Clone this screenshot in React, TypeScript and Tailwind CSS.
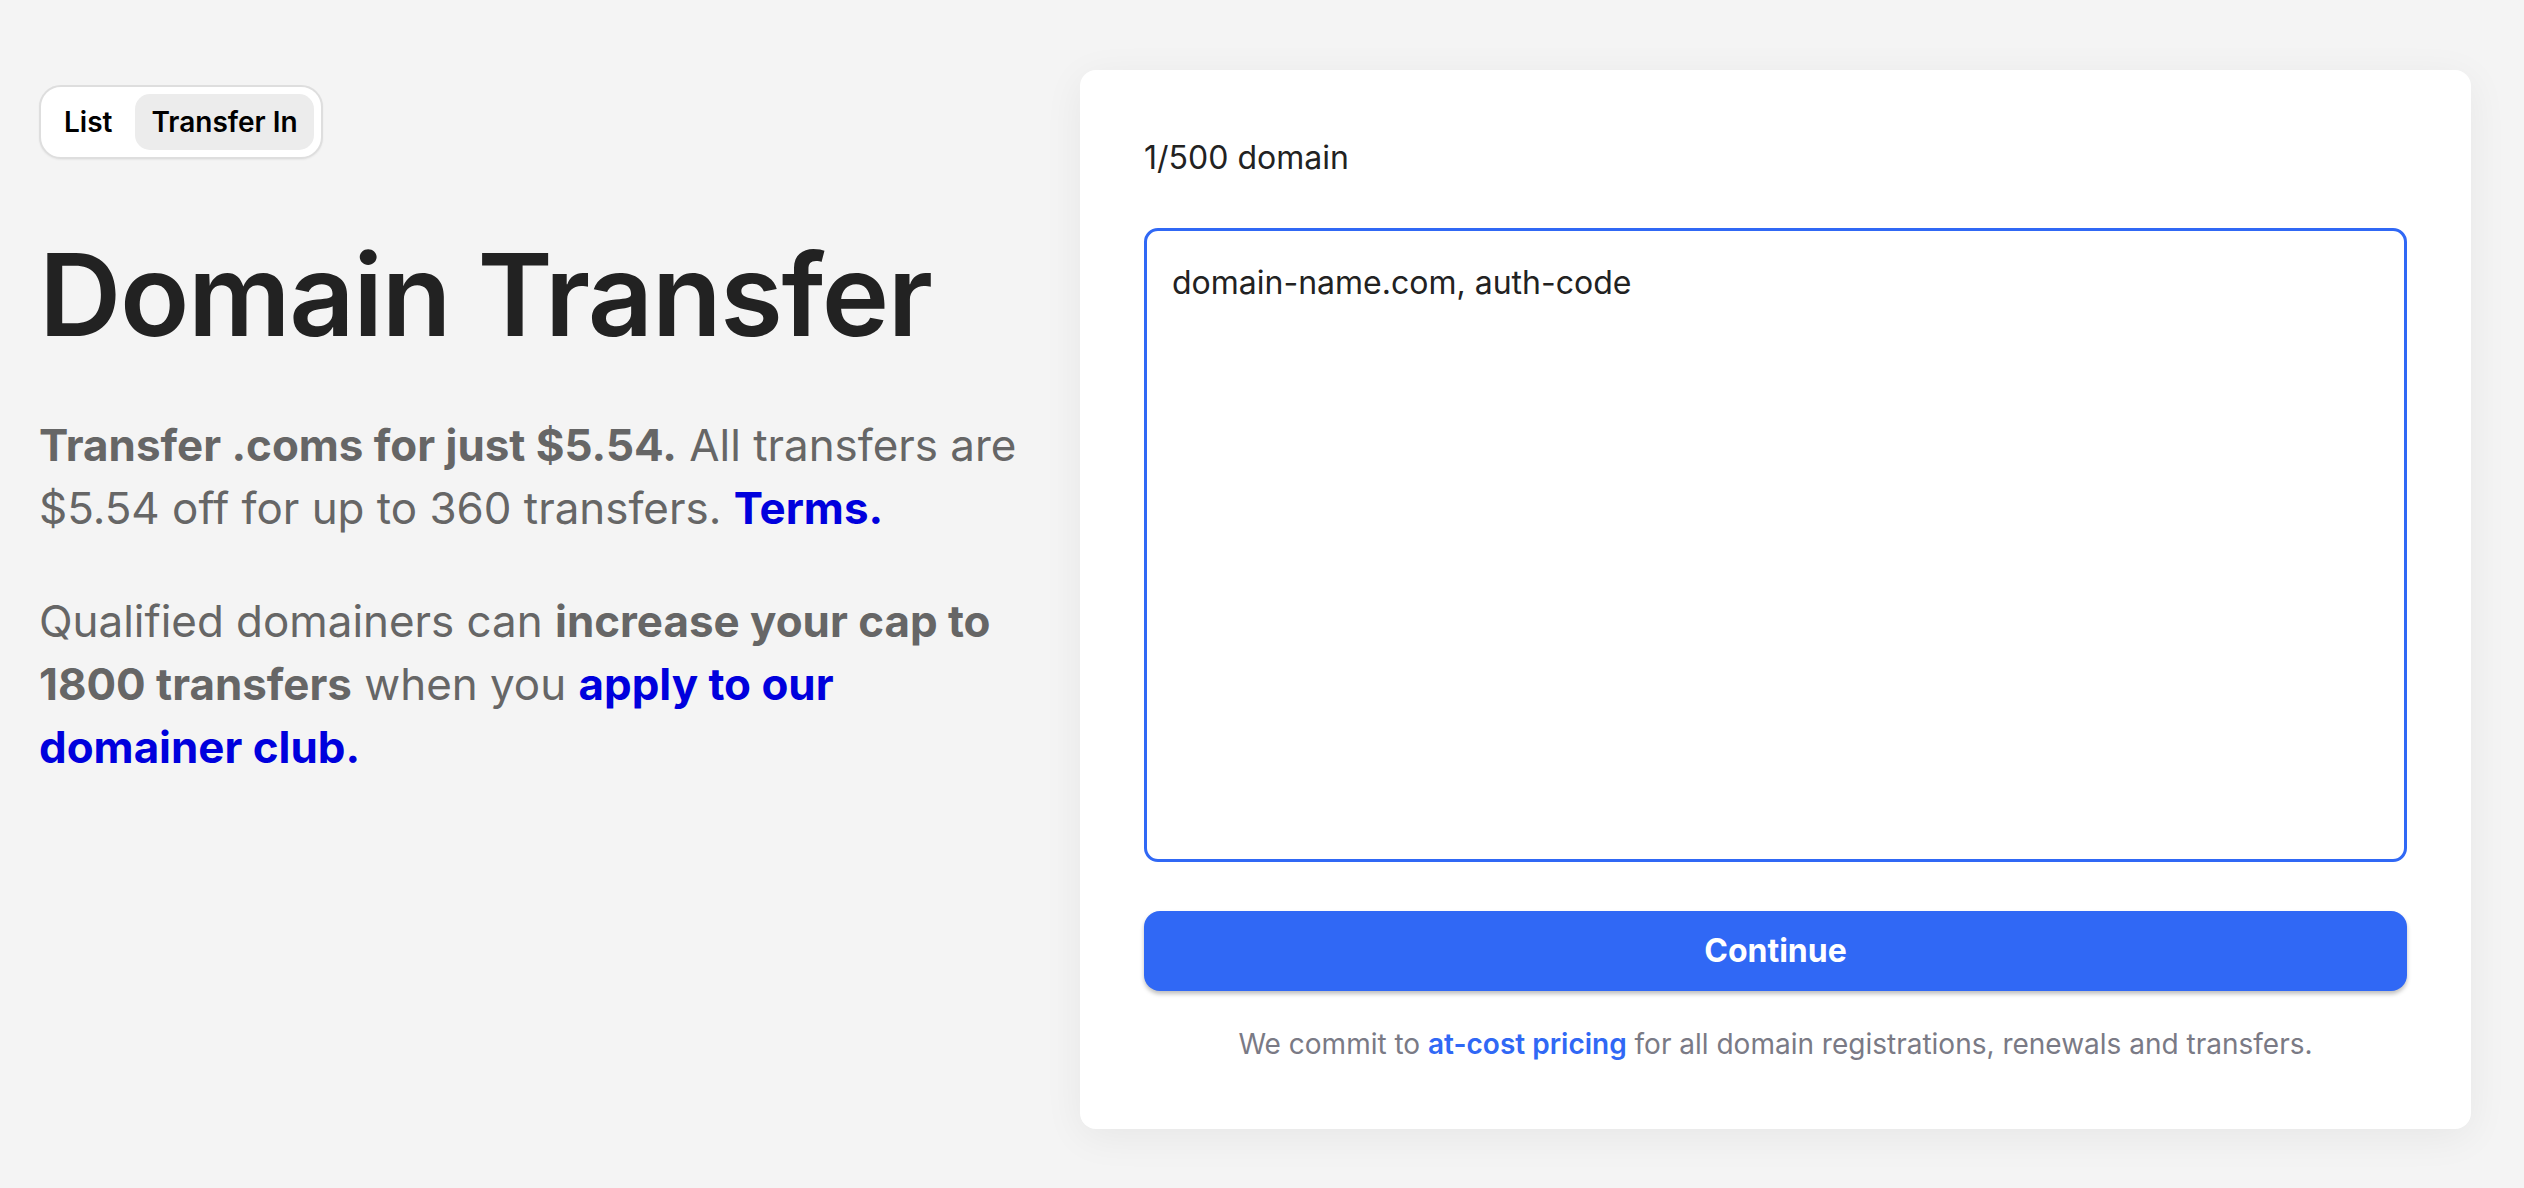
import { useEffect, useRef, useState } from 'react';

export default function App() {
  const [tab, setTab] = useState<'list' | 'transfer'>('transfer');
  const [value, setValue] = useState('domain-name.com, auth-code');
  const areaRef = useRef<HTMLTextAreaElement>(null);

  // keep the caret at the end of the sample text, like the live page
  useEffect(() => {
    const el = areaRef.current;
    if (!el) return;
    el.focus();
    el.setSelectionRange(el.value.length, el.value.length);
  }, []);

  return (
    <div className="min-h-screen w-full bg-[#f4f4f4] font-['Inter','Noto_Sans',sans-serif]">
      <div className="flex items-start pl-[39px] pt-[70px]">
        {/* left column */}
        <div className="w-[1001px] shrink-0 pt-[15px]">
          <div className="inline-flex items-center gap-[7px] rounded-[22px] border-2 border-[#dedede] bg-white p-[7px] shadow-[0_1px_2px_rgba(0,0,0,0.06)]">
            <button
              onClick={() => setTab('list')}
              className={`h-[56px] rounded-[15px] px-[16px] text-[28px] font-semibold text-black ${
                tab === 'list' ? 'bg-[#ececec]' : ''
              }`}
            >
              List
            </button>
            <button
              onClick={() => setTab('transfer')}
              className={`h-[56px] rounded-[15px] px-[16px] text-[28px] font-semibold text-black ${
                tab === 'transfer' ? 'bg-[#ececec]' : ''
              }`}
            >
              Transfer In
            </button>
          </div>

          <h1 className="mt-[67px] text-[114px] font-semibold leading-[137px] tracking-[-0.012em] text-[#222222]">
            Domain Transfer
          </h1>

          <p className="mt-[51px] text-[43.9px] leading-[63px] text-[#666666]">
            <span className="font-bold">Transfer .coms for just $5.54.</span> All transfers are
            $5.54 off for up to 360 transfers.{' '}
            <a href="#" className="font-bold text-[#0000dd]">
              Terms.
            </a>
          </p>

          <p className="mt-[50px] text-[43.9px] leading-[63px] text-[#666666]">
            Qualified domainers can <span className="font-bold">increase your cap to 1800 transfers</span>{' '}
            when you{' '}
            <a href="#" className="font-bold text-[#0000dd]">
              apply to our domainer club.
            </a>
          </p>
        </div>

        {/* right card */}
        <div className="ml-[40px] w-[1391px] shrink-0 rounded-[16px] bg-white px-[64px] pt-[65px] pb-[64px] shadow-[0_8px_40px_rgba(0,0,0,0.06)]">
          <div className="text-[32px] leading-[45px] text-[#222222]">1/500 domain</div>

          <textarea
            ref={areaRef}
            value={value}
            onChange={(e) => setValue(e.target.value)}
            className="mt-[48px] block h-[634px] w-full resize-none rounded-[14px] border-[3px] border-[#3068f5] bg-white px-[25px] py-[28px] text-[32px] leading-[48px] text-[#222222] caret-[#222222] outline-none"
          />

          <button className="mt-[49px] flex h-[80px] w-full items-center justify-center rounded-[16px] bg-[#3068f5] text-[32px] font-bold text-white shadow-[0_3px_4px_rgba(0,0,0,0.25)]">
            Continue
          </button>

          <p className="mt-[32px] text-center text-[28px] leading-[42px] text-[#7a7a85]">
            We commit to{' '}
            <a href="#" className="font-semibold text-[#3068f5]">
              at-cost pricing
            </a>{' '}
            for all domain registrations, renewals and transfers.
          </p>
        </div>
      </div>
    </div>
  );
}
